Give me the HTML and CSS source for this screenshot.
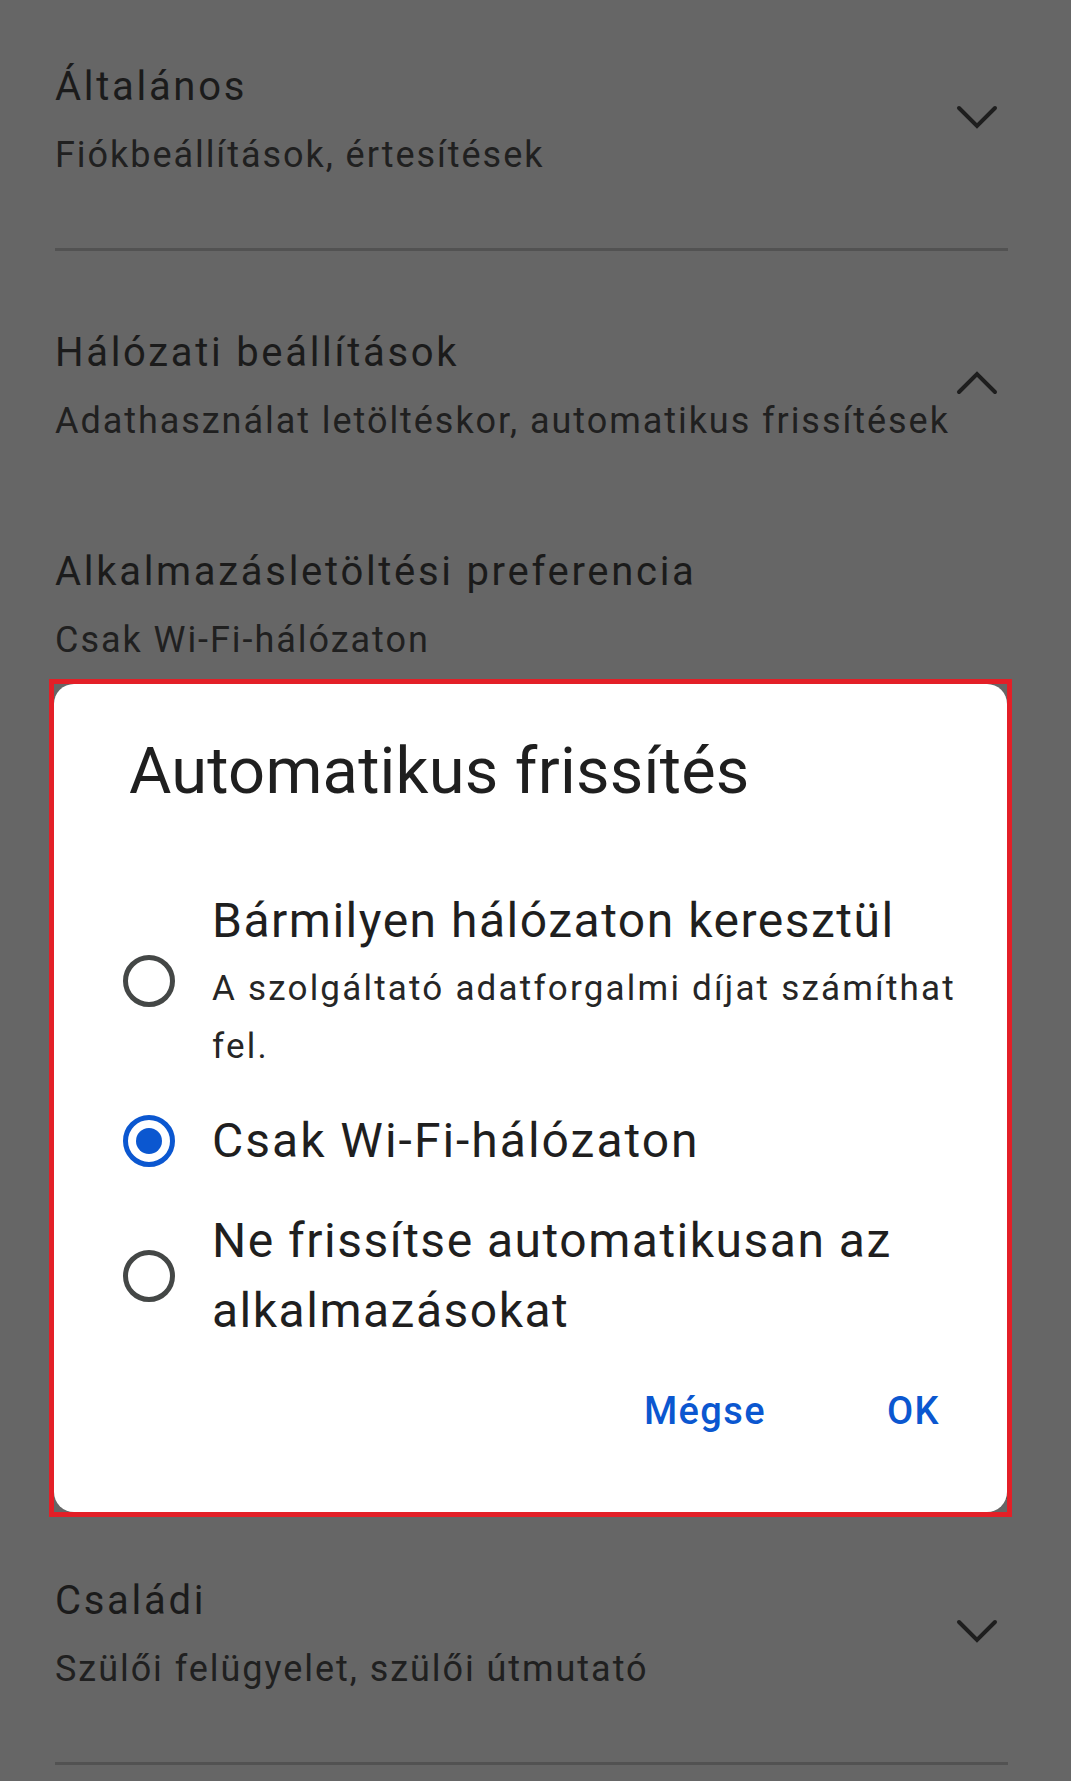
FILE: index.html
```html
<!DOCTYPE html>
<html lang="hu">
<head>
<meta charset="utf-8">
<title>Beállítások</title>
<link rel="stylesheet" href="styles.css">
</head>
<body>
<div class="screen">
  <div class="list">
    <section class="group">
      <div class="row row-cut">
        <div class="row-text">
          <div class="row-title">Általános</div>
          <div class="row-sub">Fiókbeállítások, értesítések</div>
        </div>
        <svg class="chev" viewBox="0 0 44 28" width="44" height="28"><polyline points="4,3 22,21 40,3"/></svg>
      </div>
    </section>
    <div class="divider"></div>
    <section class="group group-open">
      <div class="row row-head">
        <div class="row-text">
          <div class="row-title">Hálózati beállítások</div>
          <div class="row-sub">Adathasználat letöltéskor, automatikus frissítések</div>
        </div>
        <svg class="chev" viewBox="0 0 44 28" width="44" height="28"><polyline points="4,21 22,3 40,21"/></svg>
      </div>
      <div class="row row-child">
        <div class="row-text">
          <div class="row-title">Alkalmazásletöltési preferencia</div>
          <div class="row-sub">Csak Wi-Fi-hálózaton</div>
        </div>
      </div>
    </section>
    <div class="divider"></div>
    <section class="group">
      <div class="row">
        <div class="row-text">
          <div class="row-title">Családi</div>
          <div class="row-sub">Szülői felügyelet, szülői útmutató</div>
        </div>
        <svg class="chev" viewBox="0 0 44 28" width="44" height="28"><polyline points="4,3 22,21 40,3"/></svg>
      </div>
    </section>
    <div class="divider"></div>
  </div>

  <div class="highlight">
    <div class="dialog" role="dialog">
      <h2 class="dialog-title">Automatikus frissítés</h2>
      <div class="options">
        <div class="option">
          <span class="radio"></span>
          <div class="option-text">
            <div class="option-label">Bármilyen hálózaton keresztül</div>
            <div class="option-desc">A szolgáltató adatforgalmi díjat számíthat fel.</div>
          </div>
        </div>
        <div class="option">
          <span class="radio radio-on"></span>
          <div class="option-text">
            <div class="option-label label-short">Csak Wi-Fi-hálózaton</div>
          </div>
        </div>
        <div class="option">
          <span class="radio"></span>
          <div class="option-text">
            <div class="option-label">Ne frissítse automatikusan az alkalmazásokat</div>
          </div>
        </div>
      </div>
      <div class="actions">
        <span class="btn">Mégse</span>
        <span class="btn">OK</span>
      </div>
    </div>
  </div>
</div>
</body>
</html>
```

FILE: styles.css
```css
html, body {
  margin: 0;
  padding: 0;
}
body {
  background: #666666;
  font-family: Roboto, "Noto Sans", sans-serif;
  color: #1b1b1b;
}
.screen {
  position: relative;
  width: 1071px;
  height: 1781px;
  overflow: hidden;
}
.list {
  margin: 0 63px 0 55px;
}
.row {
  display: flex;
  align-items: flex-start;
  padding: 70px 0 61px;
}
.row-cut {
  padding-top: 55px;
}
.row-head {
  padding-bottom: 43px;
}
.row-child {
  padding: 44px 0 43px;
}
/* remaining expanded rows lie hidden under the dialog */
.group-open {
  padding-bottom: 781px;
}
.row-text {
  flex: 1;
  min-width: 0;
}
.row-title {
  font-size: 40px;
  line-height: 64px;
  letter-spacing: 2.7px;
  white-space: nowrap;
}
.row-sub {
  font-size: 36px;
  line-height: 64px;
  letter-spacing: 1.95px;
  margin-top: 4px;
  color: #202020;
  white-space: nowrap;
}
.chev {
  flex: none;
  margin-top: 50px;
  margin-right: 9px;
  fill: none;
  stroke: #1e1e1e;
  stroke-width: 4;
  stroke-linecap: round;
  stroke-linejoin: miter;
}
.divider {
  height: 3px;
  background: #525252;
}

/* dialog */
.highlight {
  position: absolute;
  left: 49px;
  top: 679px;
  width: 953px;
  border: 5px solid #e31f27;
}
.dialog {
  background: #ffffff;
  border-radius: 20px;
  height: 828px;
  box-sizing: border-box;
  padding-top: 47px;
  display: flex;
  flex-direction: column;
}
.dialog-title {
  margin: 0 0 60px;
  padding-left: 75px;
  font-size: 65px;
  line-height: 80px;
  font-weight: 400;
  color: #1f1f1f;
  letter-spacing: 0.2px;
}
.options {
  padding: 0 30px 0 69px;
}
.option {
  display: flex;
  align-items: center;
  gap: 37px;
  padding: 15px 0;
}
.radio {
  flex: none;
  width: 52px;
  height: 52px;
  box-sizing: border-box;
  border: 5px solid #444746;
  border-radius: 50%;
  display: flex;
  align-items: center;
  justify-content: center;
}
.radio-on {
  border-color: #0b57d0;
}
.radio-on::after {
  content: "";
  width: 26px;
  height: 26px;
  border-radius: 50%;
  background: #0b57d0;
}
.option-text {
  flex: 1;
  min-width: 0;
}
.option-label {
  font-size: 48px;
  line-height: 70px;
  letter-spacing: 1.5px;
  color: #1f1f1f;
}
.label-short {
  letter-spacing: 2px;
}
.option-desc {
  font-size: 35px;
  line-height: 58px;
  letter-spacing: 2.2px;
  margin-top: 4px;
  color: #262626;
}
.actions {
  display: flex;
  justify-content: flex-end;
  gap: 121px;
  padding-right: 67px;
  margin-top: 22px;
}
.btn {
  font-size: 38px;
  line-height: 56px;
  font-weight: 500;
  letter-spacing: 1.4px;
  color: #0b57d0;
}
```
